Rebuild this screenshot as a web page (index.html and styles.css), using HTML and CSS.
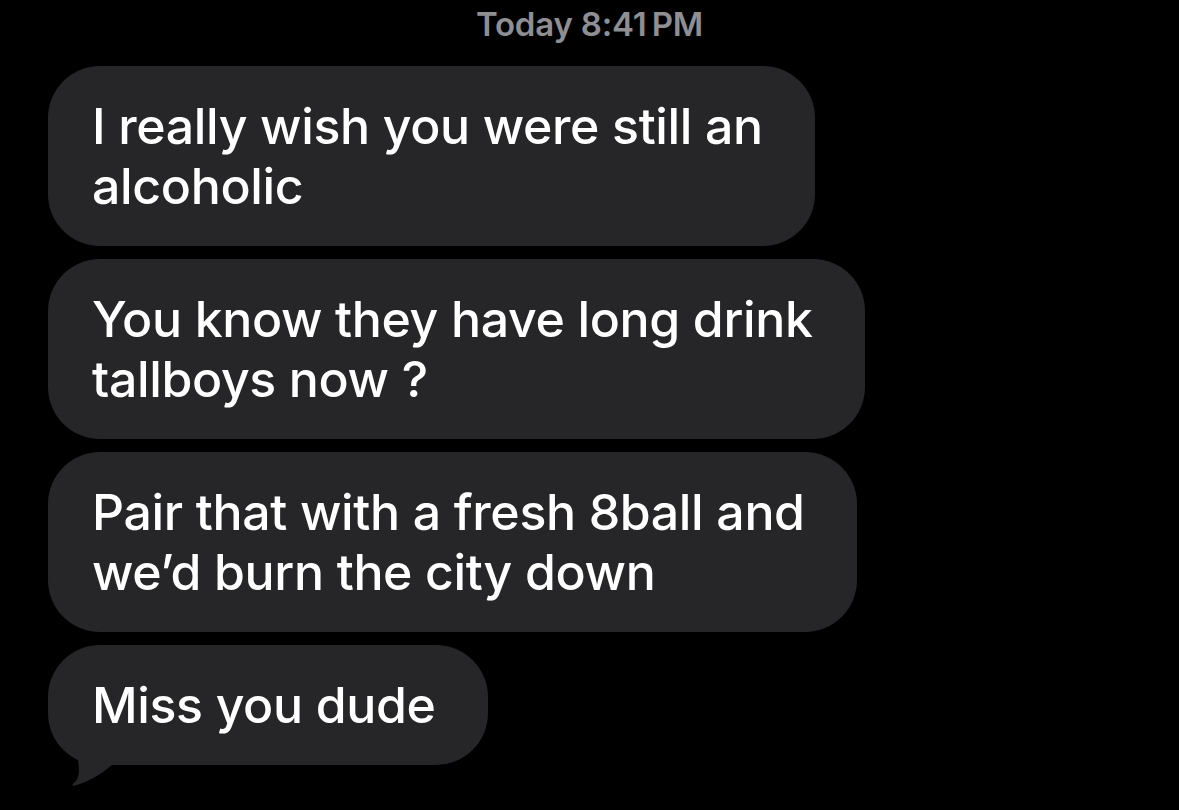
FILE: index.html
```html
<!DOCTYPE html>
<html>
<head>
<meta charset="utf-8">
<link rel="stylesheet" href="styles.css">
</head>
<body>
<div class="thread">
  <div class="stamp"><span class="day">Today</span> 8:41&#8201;PM</div>
  <div class="bubble">I really wish you were still an<br>alcoholic</div>
  <div class="bubble">You know they have long drink<br>tallboys now ?</div>
  <div class="bubble">Pair that with a fresh 8ball and<br>we’d burn the city down</div>
  <div class="bubble last">Miss you dude<svg class="tail" viewBox="0 0 80 55"><path d="M30 0 L30 25 C32 38 31 44 25 49 Q23.5 51.5 27 50.5 C40 47 52 40 64 30 L80 30 L80 0 Z" fill="#262629"/></svg></div>
</div>
</body>
</html>
```
FILE: styles.css
```css
html, body {
  margin: 0;
  padding: 0;
  background: #000;
}
.thread {
  display: flex;
  flex-direction: column;
  align-items: flex-start;
  gap: 13px;
  padding: 0 0 40px 48px;
  font-family: Inter, "Liberation Sans", sans-serif;
}
.stamp {
  align-self: stretch;
  margin-left: -48px;
  text-align: center;
  color: #8e8e93;
  font-size: 33px;
  font-weight: 600;
  height: 53px;
  line-height: 48px;
  letter-spacing: -0.2px;
}
.bubble {
  position: relative;
  background: #262629;
  color: #fff;
  font-size: 50px;
  font-weight: 500;
  line-height: 60px;
  letter-spacing: -0.35px;
  padding: 30px 52px 30px 44px;
  border-radius: 52px;
  white-space: nowrap;
}
.tail {
  position: absolute;
  left: 0;
  top: calc(100% - 30px);
  width: 80px;
  height: 55px;
  display: block;
  overflow: visible;
}
```
